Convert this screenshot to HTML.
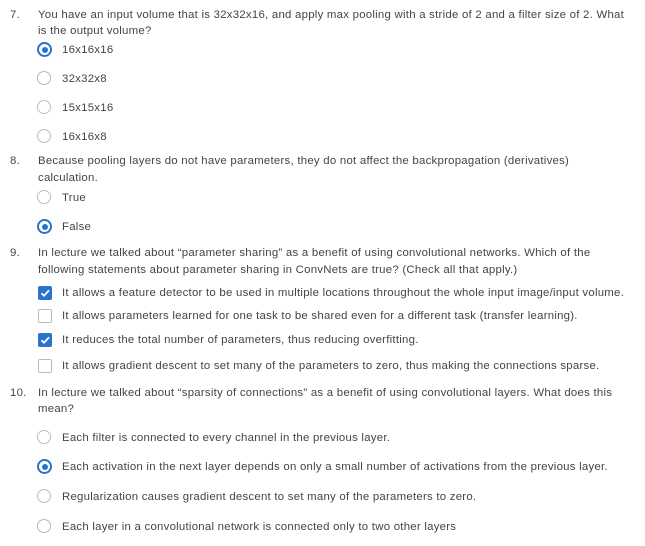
<!DOCTYPE html>
<html><head><style>
body{margin:0;width:645px;height:546px;background:#fff;position:relative;font-family:"Liberation Sans",sans-serif;font-size:11.4px;letter-spacing:0.25px;color:#444;overflow:hidden}
.t{position:absolute;white-space:nowrap;line-height:13px}
.r{position:absolute;width:12px;height:12px;border:1.5px solid #bbb;border-radius:50%;box-sizing:content-box}
.r.on{border:2px solid #2a73cc;width:11px;height:11px}
.r.on::after{content:"";position:absolute;left:2.5px;top:2.5px;width:6px;height:6px;border-radius:50%;background:#2a73cc}
.c{position:absolute;width:12px;height:12px;border:1.5px solid #bbb;border-radius:2px}
.c.on{background:#2a73cc;border-color:#2a73cc}
.c.on svg{position:absolute;left:0;top:0}
</style></head><body>
<div class="t" style="left:10px;top:9px">7.</div>
<div class="t" style="left:38px;top:9px">You have an input volume that is 32x32x16, and apply max pooling with a stride of 2 and a filter size of 2. What</div>
<div class="t" style="left:38px;top:25px">is the output volume?</div>
<div class="r on" style="left:37px;top:42px"></div><div class="t" style="left:62px;top:44px">16x16x16</div>
<div class="r" style="left:37px;top:71px"></div><div class="t" style="left:62px;top:73px">32x32x8</div>
<div class="r" style="left:37px;top:100px"></div><div class="t" style="left:62px;top:102px">15x15x16</div>
<div class="r" style="left:37px;top:129px"></div><div class="t" style="left:62px;top:131px">16x16x8</div>

<div class="t" style="left:10px;top:155px">8.</div>
<div class="t" style="left:38px;top:155px">Because pooling layers do not have parameters, they do not affect the backpropagation (derivatives)</div>
<div class="t" style="left:38px;top:172px">calculation.</div>
<div class="r" style="left:37px;top:190px"></div><div class="t" style="left:62px;top:192px">True</div>
<div class="r on" style="left:37px;top:219px"></div><div class="t" style="left:62px;top:221px">False</div>

<div class="t" style="left:10px;top:247px">9.</div>
<div class="t" style="left:38px;top:247px">In lecture we talked about “parameter sharing” as a benefit of using convolutional networks. Which of the</div>
<div class="t" style="left:38px;top:264px">following statements about parameter sharing in ConvNets are true? (Check all that apply.)</div>
<div class="c on" style="left:38px;top:286px"><svg width="12" height="12"><path d="M2.5 6.2 L5 8.7 L10 3.3" stroke="#fff" stroke-width="1.8" fill="none"/></svg></div><div class="t" style="left:62px;top:287px">It allows a feature detector to be used in multiple locations throughout the whole input image/input volume.</div>
<div class="c" style="left:38px;top:309px"></div><div class="t" style="left:62px;top:310px">It allows parameters learned for one task to be shared even for a different task (transfer learning).</div>
<div class="c on" style="left:38px;top:333px"><svg width="12" height="12"><path d="M2.5 6.2 L5 8.7 L10 3.3" stroke="#fff" stroke-width="1.8" fill="none"/></svg></div><div class="t" style="left:62px;top:334px">It reduces the total number of parameters, thus reducing overfitting.</div>
<div class="c" style="left:38px;top:359px"></div><div class="t" style="left:62px;top:360px">It allows gradient descent to set many of the parameters to zero, thus making the connections sparse.</div>

<div class="t" style="left:10px;top:387px">10.</div>
<div class="t" style="left:38px;top:387px">In lecture we talked about “sparsity of connections” as a benefit of using convolutional layers. What does this</div>
<div class="t" style="left:38px;top:403px">mean?</div>
<div class="r" style="left:37px;top:430px"></div><div class="t" style="left:62px;top:432px">Each filter is connected to every channel in the previous layer.</div>
<div class="r on" style="left:37px;top:459px"></div><div class="t" style="left:62px;top:461px">Each activation in the next layer depends on only a small number of activations from the previous layer.</div>
<div class="r" style="left:37px;top:489px"></div><div class="t" style="left:62px;top:491px">Regularization causes gradient descent to set many of the parameters to zero.</div>
<div class="r" style="left:37px;top:519px"></div><div class="t" style="left:62px;top:521px">Each layer in a convolutional network is connected only to two other layers</div>
</body></html>
